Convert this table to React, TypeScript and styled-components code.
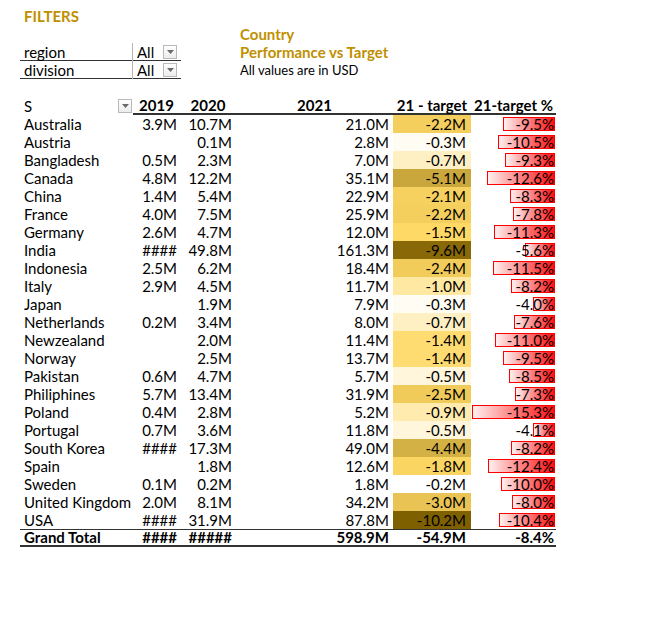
import React from 'react';
import styled, { createGlobalStyle } from 'styled-components';

const GlobalStyle = createGlobalStyle`
  html, body { margin: 0; padding: 0; background: #ffffff; }
  body { font-family: Lato, "Liberation Sans", sans-serif; color: #000000; }
`;

type Row = { name: string; y19: string; y20: string; y21: string; diff: number; pct: number };

const rows: Row[] = [
  { name: 'Australia', y19: '3.9M', y20: '10.7M', y21: '21.0M', diff: -2.2, pct: -9.5 },
  { name: 'Austria', y19: '', y20: '0.1M', y21: '2.8M', diff: -0.3, pct: -10.5 },
  { name: 'Bangladesh', y19: '0.5M', y20: '2.3M', y21: '7.0M', diff: -0.7, pct: -9.3 },
  { name: 'Canada', y19: '4.8M', y20: '12.2M', y21: '35.1M', diff: -5.1, pct: -12.6 },
  { name: 'China', y19: '1.4M', y20: '5.4M', y21: '22.9M', diff: -2.1, pct: -8.3 },
  { name: 'France', y19: '4.0M', y20: '7.5M', y21: '25.9M', diff: -2.2, pct: -7.8 },
  { name: 'Germany', y19: '2.6M', y20: '4.7M', y21: '12.0M', diff: -1.5, pct: -11.3 },
  { name: 'India', y19: '####', y20: '49.8M', y21: '161.3M', diff: -9.6, pct: -5.6 },
  { name: 'Indonesia', y19: '2.5M', y20: '6.2M', y21: '18.4M', diff: -2.4, pct: -11.5 },
  { name: 'Italy', y19: '2.9M', y20: '4.5M', y21: '11.7M', diff: -1.0, pct: -8.2 },
  { name: 'Japan', y19: '', y20: '1.9M', y21: '7.9M', diff: -0.3, pct: -4.0 },
  { name: 'Netherlands', y19: '0.2M', y20: '3.4M', y21: '8.0M', diff: -0.7, pct: -7.6 },
  { name: 'Newzealand', y19: '', y20: '2.0M', y21: '11.4M', diff: -1.4, pct: -11.0 },
  { name: 'Norway', y19: '', y20: '2.5M', y21: '13.7M', diff: -1.4, pct: -9.5 },
  { name: 'Pakistan', y19: '0.6M', y20: '4.7M', y21: '5.7M', diff: -0.5, pct: -8.5 },
  { name: 'Philiphines', y19: '5.7M', y20: '13.4M', y21: '31.9M', diff: -2.5, pct: -7.3 },
  { name: 'Poland', y19: '0.4M', y20: '2.8M', y21: '5.2M', diff: -0.9, pct: -15.3 },
  { name: 'Portugal', y19: '0.7M', y20: '3.6M', y21: '11.8M', diff: -0.5, pct: -4.1 },
  { name: 'South Korea', y19: '####', y20: '17.3M', y21: '49.0M', diff: -4.4, pct: -8.2 },
  { name: 'Spain', y19: '', y20: '1.8M', y21: '12.6M', diff: -1.8, pct: -12.4 },
  { name: 'Sweden', y19: '0.1M', y20: '0.2M', y21: '1.8M', diff: -0.2, pct: -10.0 },
  { name: 'United Kingdom', y19: '2.0M', y20: '8.1M', y21: '34.2M', diff: -3.0, pct: -8.0 },
  { name: 'USA', y19: '####', y20: '31.9M', y21: '87.8M', diff: -10.2, pct: -10.4 },
];

const MIN = -10.2;
const MID = -1.5;
const MAX = -0.2;
const DARK = [127, 96, 0];
const GOLD = [255, 217, 102];
const WHITE = [255, 255, 255];

function mix(a: number[], b: number[], t: number) {
  const c = a.map((v, i) => Math.round(v + (b[i] - v) * t));
  return `rgb(${c[0]}, ${c[1]}, ${c[2]})`;
}

function scaleColor(v: number) {
  if (v >= MID) return mix(GOLD, WHITE, (v - MID) / (MAX - MID));
  return mix(GOLD, DARK, (v - MID) / (MIN - MID));
}

const MAX_PCT = 15.3;
const BAR_MAX = 83;

const Page = styled.div`
  width: 650px;
  height: 628px;
  box-sizing: border-box;
  padding: 7px 0 0 20px;
`;

const Top = styled.div`
  display: flex;
  gap: 59px;
`;

const Filters = styled.div`
  width: 161px;
  display: flex;
  flex-direction: column;
`;

const Heading = styled.div`
  height: 18px;
  line-height: 18px;
  padding-left: 4px;
  font-weight: 700;
  font-size: 15px;
  color: #bf9000;
`;

const Spacer = styled.div`
  height: 18px;
`;

const FilterRow = styled.div`
  display: grid;
  grid-template-columns: 113px 48px;
  height: 18px;
  box-sizing: border-box;
  border-bottom: 1px solid #333333;
  font-size: 15px;
`;

const FilterLabel = styled.div`
  padding-left: 4px;
  line-height: 18px;
  border-right: 1px solid #b5b5b5;
`;

const FilterValue = styled.div`
  display: flex;
  align-items: center;
  padding: 0 4px;
  line-height: 18px;
`;

const DropButton = styled.span`
  width: 14px;
  height: 14px;
  box-sizing: border-box;
  border: 1px solid #b9b9b9;
  background: linear-gradient(#ffffff, #ececec);
  display: flex;
  align-items: center;
  justify-content: center;
  margin-left: auto;
`;

const TitlePanel = styled.div`
  padding-top: 18px;
  display: flex;
  flex-direction: column;
`;

const TitleLine = styled.div`
  height: 18px;
  line-height: 18px;
  font-size: 15px;
  font-weight: 700;
  color: #bf9000;
  white-space: nowrap;
`;

const Note = styled.div`
  height: 18px;
  line-height: 18px;
  font-size: 13px;
  white-space: nowrap;
`;

const Table = styled.div`
  margin-top: 18px;
  display: grid;
  grid-template-columns: 113px 47px 56px 157px 78px 85px;
  grid-auto-rows: 18px;
  width: 536px;
  font-size: 15px;
`;

const HeadName = styled.div`
  display: flex;
  align-items: center;
  padding: 0 1px 0 4px;
  line-height: 18px;
`;

const HeadCell = styled.div`
  text-align: center;
  font-weight: 700;
  line-height: 17px;
  box-sizing: border-box;
  border-bottom: 2px solid #333333;
  white-space: nowrap;
`;

const NameCell = styled.div`
  padding-left: 4px;
  line-height: 18px;
  white-space: nowrap;
`;

const NumCell = styled.div<{ $pad: number }>`
  text-align: right;
  padding-right: ${(p) => p.$pad}px;
  line-height: 18px;
  white-space: nowrap;
`;

const TargetCell = styled.div<{ $bg: string }>`
  text-align: right;
  padding-right: 5px;
  line-height: 18px;
  background: ${(p) => p.$bg};
  white-space: nowrap;
`;

const PctCell = styled.div`
  display: flex;
  justify-content: flex-end;
  align-items: center;
  padding-right: 1px;
`;

const Bar = styled.div`
  height: 14px;
  box-sizing: border-box;
  border: 1px solid #ff0000;
  background: linear-gradient(to right, #fff0f0, #ff1010);
  display: flex;
  justify-content: flex-end;
  align-items: center;
  line-height: 14px;
  white-space: nowrap;
`;

const TotalCell = styled.div<{ $align: 'left' | 'right'; $pad: number }>`
  font-weight: 700;
  text-align: ${(p) => p.$align};
  padding-${(p) => (p.$align === 'left' ? 'left' : 'right')}: ${(p) => p.$pad}px;
  box-sizing: border-box;
  border-top: 1px solid #333333;
  border-bottom: 2px solid #333333;
  line-height: 15px;
  white-space: nowrap;
`;

const Arrow = () => (
  <svg width="7" height="4" viewBox="0 0 7 4">
    <polygon points="0,0 7,0 3.5,4" fill="#6a6a6a" />
  </svg>
);

function fmt(v: number, suffix: string) {
  return `${v.toFixed(1)}${suffix}`;
}

export default function App() {
  return (
    <>
      <GlobalStyle />
      <Page>
        <Top>
          <Filters>
            <Heading>FILTERS</Heading>
            <Spacer />
            <FilterRow>
              <FilterLabel>region</FilterLabel>
              <FilterValue>
                All
                <DropButton>
                  <Arrow />
                </DropButton>
              </FilterValue>
            </FilterRow>
            <FilterRow>
              <FilterLabel>division</FilterLabel>
              <FilterValue>
                All
                <DropButton>
                  <Arrow />
                </DropButton>
              </FilterValue>
            </FilterRow>
          </Filters>
          <TitlePanel>
            <TitleLine>Country</TitleLine>
            <TitleLine>Performance vs Target</TitleLine>
            <Note>All values are in USD</Note>
          </TitlePanel>
        </Top>
        <Table>
          <HeadName>
            S
            <DropButton>
              <Arrow />
            </DropButton>
          </HeadName>
          <HeadCell>2019</HeadCell>
          <HeadCell>2020</HeadCell>
          <HeadCell>2021</HeadCell>
          <HeadCell>21 - target</HeadCell>
          <HeadCell>21-target %</HeadCell>
          {rows.map((r) => (
            <React.Fragment key={r.name}>
              <NameCell>{r.name}</NameCell>
              <NumCell $pad={3}>{r.y19}</NumCell>
              <NumCell $pad={4}>{r.y20}</NumCell>
              <NumCell $pad={4}>{r.y21}</NumCell>
              <TargetCell $bg={scaleColor(r.diff)}>{fmt(r.diff, 'M')}</TargetCell>
              <PctCell>
                <Bar style={{ width: `${(Math.abs(r.pct) / MAX_PCT) * BAR_MAX}px` }}>
                  {fmt(r.pct, '%')}
                </Bar>
              </PctCell>
            </React.Fragment>
          ))}
          <TotalCell $align="left" $pad={4}>Grand Total</TotalCell>
          <TotalCell $align="right" $pad={3}>####</TotalCell>
          <TotalCell $align="right" $pad={4}>#####</TotalCell>
          <TotalCell $align="right" $pad={4}>598.9M</TotalCell>
          <TotalCell $align="right" $pad={5}>-54.9M</TotalCell>
          <TotalCell $align="right" $pad={2}>-8.4%</TotalCell>
        </Table>
      </Page>
    </>
  );
}
